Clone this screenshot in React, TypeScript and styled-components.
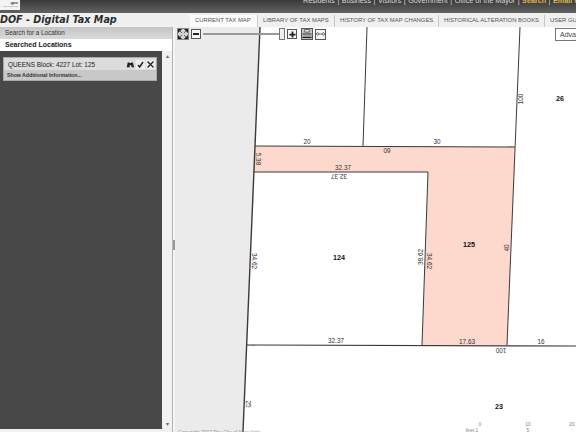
import { Fragment } from "react";
import styled, { createGlobalStyle } from "styled-components";

const Global = createGlobalStyle`
  html, body { margin: 0; padding: 0; }
  body { width: 576px; height: 432px; overflow: hidden; background: #fff; font-family: "Liberation Sans", Arial, sans-serif; }
`;

const TABS = [
  { label: "CURRENT TAX MAP", active: true, width: 68 },
  { label: "LIBRARY OF TAX MAPS", width: 77 },
  { label: "HISTORY OF TAX MAP CHANGES", width: 104 },
  { label: "HISTORICAL ALTERATION BOOKS", width: 106 },
  { label: "USER GUIDE", width: 60 },
];

const TOP_LINKS = ["Residents", "Business", "Visitors", "Government", "Office of the Mayor"];
const GOLD_LINKS = ["Search", "Email Updates", "Contact Us"];

// lines are in page coordinates, minus the map's origin (175, 27)
const MAP_LABELS = [
  { x: 132, y: 117, text: "20" },
  { x: 262, y: 117, text: "30" },
  { x: 212, y: 125, text: "60", flip: true },
  { x: 168, y: 143, text: "32.37" },
  { x: 164, y: 151, text: "32.37", flip: true },
  { x: 81, y: 132, text: "5.38", turn: 90 },
  { x: 77, y: 234, text: "34.62", turn: 90 },
  { x: 248, y: 230, text: "38.62", turn: -90 },
  { x: 252, y: 234, text: "34.62", turn: 90 },
  { x: 334, y: 221, text: "40", turn: -90 },
  { x: 348, y: 72, text: "100", turn: -90 },
  { x: 161, y: 316, text: "32.37" },
  { x: 292, y: 317, text: "17.63" },
  { x: 366, y: 317, text: "16" },
  { x: 326, y: 325, text: "100", flip: true },
  { x: 71, y: 377, text: "25", turn: 90 },
];

const LOTS = [
  { x: 164, y: 233, text: "124" },
  { x: 294, y: 220, text: "125" },
  { x: 385, y: 74, text: "26" },
  { x: 324, y: 382, text: "23" },
];

const SCALE = [
  { x: 305, y: 399, text: "0" },
  { x: 353, y: 399, text: "10" },
  { x: 397, y: 399, text: "20" },
  { x: 297, y: 405, text: "feet 1" },
  { x: 353, y: 405, text: "5" },
];

export default function App() {
  return (
    <Page>
      <Global />
      <TopBar>
        <Logo>
          <LogoText>.gov</LogoText>
          <LogoCaption>City of New York</LogoCaption>
        </Logo>
        <TopLinks>
          {TOP_LINKS.map((link) => (
            <Fragment key={link}>
              <TopLink>{link}</TopLink>
              <TopLink>|</TopLink>
            </Fragment>
          ))}
          {GOLD_LINKS.map((link, index) => (
            <Fragment key={link}>
              <TopLink $gold>{link}</TopLink>
              {index < GOLD_LINKS.length - 1 && <TopLink>|</TopLink>}
            </Fragment>
          ))}
        </TopLinks>
      </TopBar>
      <Header>
        <Title>DOF - Digital Tax Map</Title>
        <Tabs>
          {TABS.map((tab) => (
            <Tab key={tab.label} $active={tab.active} $width={tab.width}>
              {tab.label}
            </Tab>
          ))}
        </Tabs>
      </Header>
      <Body>
        <Sidebar>
          <Accordion>Search for a Location</Accordion>
          <AccordionOpen>Searched Locations</AccordionOpen>
          <ResultsPane>
            <Results>
              <ResultCard>
                <ResultHead>
                  <ResultTitle>QUEENS Block: 4227 Lot: 125</ResultTitle>
                  <ResultIcons>
                    <svg width="9" height="9" viewBox="0 0 13 10">
                      <path d="M1 9 L2.5 2 L5 2 L5.5 9 Z M8 9 L7.5 2 L10 2 L11.8 9 Z M5 3 H8 V6 H5 Z" fill="#222" />
                    </svg>
                    <IconChip>
                      <svg width="9" height="9" viewBox="0 0 9 9">
                        <path d="M2 5 L3.7 7 L7 2" fill="none" stroke="#222" strokeWidth="1.5" />
                      </svg>
                    </IconChip>
                    <IconChip>
                      <svg width="9" height="9" viewBox="0 0 9 9">
                        <path d="M1.5 1.5 L7.5 7.5 M7.5 1.5 L1.5 7.5" fill="none" stroke="#222" strokeWidth="1.3" />
                      </svg>
                    </IconChip>
                  </ResultIcons>
                </ResultHead>
                <MoreInfo>Show Additional Information...</MoreInfo>
              </ResultCard>
            </Results>
            <Scrollbar>
              <ScrollArrow>▴</ScrollArrow>
              <ScrollArrow>▾</ScrollArrow>
            </Scrollbar>
          </ResultsPane>
        </Sidebar>
        <Splitter>
          <SplitterGrip />
        </Splitter>
        <MapArea>
          <MapDrawing viewBox="0 0 401 405" width="401" height="405">
            <polygon points="0,0 85,0 68,405 0,405" fill="#ebebeb" />
            <polygon points="80,119 340,120 332,318 247,318 253,145 79,145" fill="#fdd8cc" />
            <g fill="none" stroke="#3a3a3a" strokeWidth="1">
              <path d="M85 0 L68 405" strokeWidth="1.4" />
              <path d="M80 119 L340 120" strokeWidth="1.2" />
              <path d="M79 145 L253 145" strokeWidth="1.2" />
              <path d="M253 145 L247 318" />
              <path d="M72 318 L401 319" strokeWidth="1.2" />
              <path d="M192 0 L188 119" />
              <path d="M345 0 L332 318" />
            </g>
            {MAP_LABELS.map((label) => (
              <MapLabel
                key={`${label.x}-${label.y}`}
                x={label.x}
                y={label.y}
                textAnchor="middle"
                transform={
                  label.flip
                    ? `rotate(180 ${label.x} ${label.y - 2})`
                    : label.turn
                      ? `rotate(${label.turn} ${label.x} ${label.y})`
                      : undefined
                }
              >
                {label.text}
              </MapLabel>
            ))}
            {LOTS.map((lot) => (
              <LotLabel key={lot.text} x={lot.x} y={lot.y} textAnchor="middle">
                {lot.text}
              </LotLabel>
            ))}
            {SCALE.map((mark) => (
              <ScaleLabel key={mark.text} x={mark.x} y={mark.y} textAnchor="middle">
                {mark.text}
              </ScaleLabel>
            ))}
          </MapDrawing>
          <MapToolbar>
            <FullExtentButton $size={12}>
              <svg width="10" height="10" viewBox="0 0 11 11">
                <path
                  d="M0 0 L4 0 L0 4 Z M11 0 L7 0 L11 4 Z M0 11 L4 11 L0 7 Z M11 11 L7 11 L11 7 Z M2 2 L4.5 4.5 M9 2 L6.5 4.5 M2 9 L4.5 6.5 M9 9 L6.5 6.5"
                  fill="#222"
                  stroke="#222"
                  strokeWidth="0.7"
                />
              </svg>
            </FullExtentButton>
            <ToolButton $size={10}>
              <IconBar />
            </ToolButton>
            <SliderTrack>
              <SliderThumb />
            </SliderTrack>
            <ToolButton $size={10}>
              <svg width="7" height="7" viewBox="0 0 8 8">
                <path d="M3 0.5 H5 V3 H7.5 V5 H5 V7.5 H3 V5 H0.5 V3 H3 Z" fill="#222" />
              </svg>
            </ToolButton>
            <PrintButton $size={12}>
              <svg width="10" height="10" viewBox="0 0 11 11">
                <path d="M3 0.5 H8 V3.5 H3 Z" fill="#ddd" stroke="#333" strokeWidth="0.7" />
                <path d="M0.5 4.5 H10.5 V7 H0.5 Z" fill="#777" />
                <path d="M0.5 8.5 H10.5 V10 H0.5 Z" fill="#222" />
              </svg>
            </PrintButton>
            <ToolButton $size={11}>
              <svg width="9" height="6" viewBox="0 0 11 7">
                <circle cx="2" cy="3.5" r="1.5" fill="none" stroke="#333" strokeWidth="0.8" />
                <circle cx="9" cy="3.5" r="1.5" fill="none" stroke="#333" strokeWidth="0.8" />
                <path d="M3.5 3.5 H7.5" stroke="#333" strokeWidth="0.8" />
              </svg>
            </ToolButton>
          </MapToolbar>
          <AdvancedButton>Advanced</AdvancedButton>
          <Copyright>Copyright 2007 The City of New York</Copyright>
        </MapArea>
      </Body>
    </Page>
  );
}

const Page = styled.div`
  width: 576px;
  height: 432px;
  display: flex;
  flex-direction: column;
  overflow: hidden;
`;

const TopBar = styled.div`
  height: 13px;
  flex: none;
  display: flex;
  justify-content: space-between;
  background: linear-gradient(#3a3a3a, #626262);
`;

const Logo = styled.div`
  width: 20px;
  height: 10px;
  box-sizing: border-box;
  padding-right: 2px;
  background: #f4f4f4;
  display: flex;
  flex-direction: column;
  align-items: flex-end;
  overflow: hidden;
`;

const LogoText = styled.span`
  font-size: 4px;
  line-height: 5px;
  font-weight: bold;
  color: #333;
`;

const LogoCaption = styled.span`
  font-size: 2px;
  line-height: 3px;
  color: #666;
  white-space: nowrap;
`;

const TopLinks = styled.div`
  display: flex;
  flex: none;
  width: 273px;
  margin-top: -3px;
  gap: 2.5px;
  white-space: nowrap;
  overflow: hidden;
`;

const TopLink = styled.span<{ $gold?: boolean }>`
  font-size: 7.2px;
  line-height: 8px;
  color: ${(p) => (p.$gold ? "#e0b94a" : "#ddd")};
  font-weight: ${(p) => (p.$gold ? "bold" : "normal")};
`;

const Header = styled.div`
  height: 14px;
  flex: none;
  display: flex;
  background: #f0f0f0;
  align-items: flex-end;
`;

const Title = styled.div`
  width: 190px;
  flex: none;
  font-family: "DejaVu Sans", sans-serif;
  font-size: 9.6px;
  line-height: 14px;
  font-weight: bold;
  font-style: italic;
  color: #2c2c2c;
  white-space: nowrap;
`;

const Tabs = styled.div`
  display: flex;
  flex: none;
`;

const Tab = styled.div<{ $active?: boolean; $width: number }>`
  width: ${(p) => p.$width}px;
  height: 12px;
  flex: none;
  box-sizing: border-box;
  font-family: "Liberation Sans", sans-serif;
  font-size: 5.9px;
  line-height: 11px;
  padding-left: 5px;
  color: #555;
  white-space: nowrap;
  overflow: hidden;
  background: ${(p) => (p.$active ? "#fbfbfb" : "#f0f0f0")};
  border-right: 1px solid #c8c8c8;
`;

const Body = styled.div`
  flex: 1;
  display: flex;
  min-height: 0;
`;

const Sidebar = styled.div`
  width: 172px;
  flex: none;
  display: flex;
  flex-direction: column;
`;

const Accordion = styled.div`
  height: 12px;
  flex: none;
  box-sizing: border-box;
  padding-left: 5px;
  font-size: 6.3px;
  line-height: 11px;
  color: #333;
  background: linear-gradient(#c4c4c4, #dadada);
`;

const AccordionOpen = styled(Accordion)`
  font-size: 7px;
  line-height: 12px;
  font-weight: bold;
  color: #222;
  background: #fff;
`;

const ResultsPane = styled.div`
  flex: 1;
  display: flex;
  min-height: 0;
  background: #f1f1f1;
`;

const Results = styled.div`
  width: 162px;
  flex: none;
  box-sizing: border-box;
  margin-bottom: 3px;
  padding: 6px 5px 0 3px;
  background: #484848;
`;

const ResultCard = styled.div`
  background: #c8c8c8;
  border: 1px solid #a8a8a8;
`;

const ResultHead = styled.div`
  height: 12px;
  display: flex;
  align-items: center;
  justify-content: space-between;
  padding: 0 1px 0 4px;
  background: #dcdcdc;
`;

const ResultTitle = styled.span`
  font-size: 6.4px;
  color: #222;
`;

const ResultIcons = styled.div`
  display: flex;
  align-items: center;
  gap: 1px;
`;

const IconChip = styled.span`
  width: 9px;
  height: 9px;
  display: flex;
  background: #eee;
`;

const MoreInfo = styled.div`
  height: 10px;
  padding-left: 3px;
  font-size: 5.2px;
  line-height: 10px;
  font-weight: bold;
  color: #333;
`;

const Scrollbar = styled.div`
  flex: 1;
  display: flex;
  flex-direction: column;
  justify-content: space-between;
  align-items: center;
  padding: 2px 0 5px;
`;

const ScrollArrow = styled.span`
  font-size: 6px;
  line-height: 6px;
  color: #666;
`;

const Splitter = styled.div`
  width: 3px;
  flex: none;
  background: #f4f4f4;
  border-left: 1px solid #b4b4b4;
  box-sizing: border-box;
`;

const SplitterGrip = styled.div`
  width: 2px;
  height: 10px;
  margin-top: 213px;
  background: #999;
`;

const MapArea = styled.div`
  flex: 1;
  position: relative;
  background: #fff;
  overflow: hidden;
`;

const MapDrawing = styled.svg`
  display: block;
`;

const MapLabel = styled.text`
  font-family: "Liberation Sans", sans-serif;
  font-size: 6.4px;
  fill: #333;
`;

const LotLabel = styled.text`
  font-family: "Liberation Sans", sans-serif;
  font-size: 7.2px;
  font-weight: bold;
  fill: #111;
`;

const ScaleLabel = styled.text`
  font-family: "Liberation Sans", sans-serif;
  font-size: 5px;
  fill: #888;
`;

const MapToolbar = styled.div`
  position: absolute;
  top: 1px;
  left: 2px;
  display: flex;
  align-items: center;
  gap: 2px;
`;

const ToolButton = styled.div<{ $size: number }>`
  width: ${(p) => p.$size}px;
  height: ${(p) => p.$size}px;
  flex: none;
  box-sizing: border-box;
  display: flex;
  align-items: center;
  justify-content: center;
  background: #f6f6f6;
  border: 1px solid #555;
`;

const FullExtentButton = styled(ToolButton)`
  background: #d4d4d4;
  border-color: #888;
`;

const IconBar = styled.div`
  width: 6px;
  height: 2px;
  background: #222;
`;

const SliderTrack = styled.div`
  position: relative;
  width: 82px;
  height: 2px;
  background: #999;
`;

const SliderThumb = styled.div`
  position: absolute;
  right: 0;
  top: -5px;
  width: 6px;
  height: 12px;
  box-sizing: border-box;
  background: #f0f0f0;
  border: 1px solid #777;
`;

const PrintButton = styled(ToolButton)`
  background: #c4c4c4;
  margin-left: 2px;
`;

const AdvancedButton = styled.div`
  position: absolute;
  top: 1px;
  right: -19px;
  width: 34px;
  height: 11px;
  padding-left: 4px;
  font-size: 7px;
  line-height: 11px;
  color: #444;
  background: #fff;
  border: 1px solid #777;
`;

const Copyright = styled.div`
  position: absolute;
  left: 3px;
  bottom: -3px;
  font-size: 5px;
  line-height: 6px;
  color: #999;
  white-space: nowrap;
`;
